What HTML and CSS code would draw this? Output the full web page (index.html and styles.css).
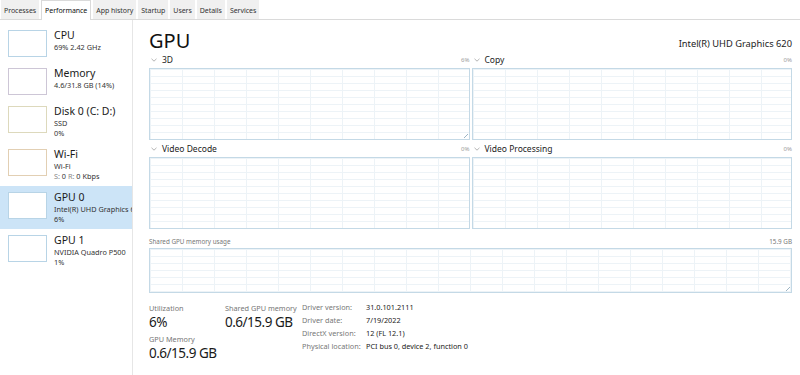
FILE: index.html
```html
<!DOCTYPE html>
<html lang="en">

<head>
    <meta charset="UTF-8">
    <meta name="viewport" content="width=device-width, initial-scale=1.0">
    <title>Task Manager - Performance</title>
    <link rel="stylesheet" href="styles.css">
</head>

<body>
    <!-- Tab strip -->
    <div class="tabs">
        <div class="tab">Processes</div>
        <div class="tab active">Performance</div>
        <div class="tab">App history</div>
        <div class="tab">Startup</div>
        <div class="tab">Users</div>
        <div class="tab">Details</div>
        <div class="tab">Services</div>
    </div>

    <div class="main">
        <!-- Device list -->
        <div class="sidebar">
            <div class="item">
                <div class="thumb cpu"></div>
                <div class="info">
                    <div class="name">CPU</div>
                    <div class="sub">69% 2.42 GHz</div>
                </div>
            </div>
            <div class="item">
                <div class="thumb mem"></div>
                <div class="info">
                    <div class="name">Memory</div>
                    <div class="sub">4.6/31.8 GB (14%)</div>
                </div>
            </div>
            <div class="item">
                <div class="thumb disk"></div>
                <div class="info">
                    <div class="name">Disk 0 (C: D:)</div>
                    <div class="sub">SSD</div>
                    <div class="sub">0%</div>
                </div>
            </div>
            <div class="item">
                <div class="thumb wifi"></div>
                <div class="info">
                    <div class="name">Wi-Fi</div>
                    <div class="sub">Wi-Fi</div>
                    <div class="sub"><span class="dim">S:</span> 0 <span class="dim">R:</span> 0 Kbps</div>
                </div>
            </div>
            <div class="item selected">
                <div class="thumb gpu"></div>
                <div class="info">
                    <div class="name">GPU 0</div>
                    <div class="sub">Intel(R) UHD Graphics 6</div>
                    <div class="sub">6%</div>
                </div>
            </div>
            <div class="item">
                <div class="thumb gpu"></div>
                <div class="info">
                    <div class="name">GPU 1</div>
                    <div class="sub">NVIDIA Quadro P500</div>
                    <div class="sub">1%</div>
                </div>
            </div>
        </div>

        <!-- GPU details -->
        <div class="content">
            <div class="header">
                <div class="title">GPU</div>
                <div class="model">Intel(R) UHD Graphics 620</div>
            </div>

            <div class="graphs">
                <div class="panel">
                    <div class="label"><svg class="caret" viewBox="0 0 6 4"><path d="M0.5 0.8 L3 3.2 L5.5 0.8"/></svg>3D <span class="pct">6%</span></div>
                    <div class="graph"><span class="grip"></span></div>
                </div>
                <div class="panel">
                    <div class="label"><svg class="caret" viewBox="0 0 6 4"><path d="M0.5 0.8 L3 3.2 L5.5 0.8"/></svg>Copy <span class="pct">0%</span></div>
                    <div class="graph"></div>
                </div>
                <div class="panel">
                    <div class="label"><svg class="caret" viewBox="0 0 6 4"><path d="M0.5 0.8 L3 3.2 L5.5 0.8"/></svg>Video Decode <span class="pct">0%</span></div>
                    <div class="graph"></div>
                </div>
                <div class="panel">
                    <div class="label"><svg class="caret" viewBox="0 0 6 4"><path d="M0.5 0.8 L3 3.2 L5.5 0.8"/></svg>Video Processing <span class="pct">0%</span></div>
                    <div class="graph"></div>
                </div>
            </div>

            <div class="shared-label">
                <span>Shared GPU memory usage</span>
                <span>15.9 GB</span>
            </div>
            <div class="graph wide"><span class="grip"></span></div>

            <div class="stats">
                <div class="stat-col">
                    <div class="stat">
                        <div class="stat-label">Utilization</div>
                        <div class="stat-value">6%</div>
                    </div>
                    <div class="stat">
                        <div class="stat-label">GPU Memory</div>
                        <div class="stat-value">0.6/15.9 GB</div>
                    </div>
                </div>
                <div class="stat-col second">
                    <div class="stat">
                        <div class="stat-label">Shared GPU memory</div>
                        <div class="stat-value">0.6/15.9 GB</div>
                    </div>
                </div>
                <div class="details">
                    <div class="key">Driver version:</div><div class="val">31.0.101.2111</div>
                    <div class="key">Driver date:</div><div class="val">7/19/2022</div>
                    <div class="key">DirectX version:</div><div class="val">12 (FL 12.1)</div>
                    <div class="key">Physical location:</div><div class="val">PCI bus 0, device 2, function 0</div>
                </div>
            </div>
        </div>
    </div>
</body>

</html>
```

FILE: styles.css
```css
body {
    margin: 0;
    font-family: "Noto Sans", "Open Sans", sans-serif;
    background-color: #ffffff;
    color: #1a1a1a;
    width: 800px;
    height: 375px;
    overflow: hidden;
}

/* Tabs */
.tabs {
    display: flex;
    height: 19px;
    padding-left: 1px;
    border-bottom: 1px solid #dadada;
    background-color: #ffffff;
}

.tab {
    font-size: 7px;
    line-height: 17px;
    padding: 2px 3px 0 3px;
    margin-right: 2px;
    background-color: #f0f0f0;
    color: #333;
    letter-spacing: -0.05px;
}

.tab.active {
    background-color: #ffffff;
    border: 1px solid #dadada;
    border-bottom: none;
    margin-bottom: -1px;
    padding-top: 0;
    line-height: 20px;
    color: #111;
}

.main {
    display: flex;
    height: 355px;
}

/* Sidebar */
.sidebar {
    width: 133px;
    border-right: 1px solid #e6e6e6;
    padding-top: 4px;
    box-sizing: border-box;
    flex-shrink: 0;
}

.item {
    display: flex;
    gap: 7px;
    padding: 5px 0 5px 8px;
    min-height: 28px;
    overflow: hidden;
    white-space: nowrap;
}

.item.selected {
    background-color: #cce4f7;
}

.thumb {
    width: 37px;
    height: 25px;
    background-color: #ffffff;
    border: 1px solid #b8d4e6;
    flex-shrink: 0;
    margin-top: 1px;
}

.thumb.mem {
    border-color: #cdc6d6;
}

.thumb.disk {
    border-color: #ddd9bc;
}

.thumb.wifi {
    border-color: #e2cfb3;
}

.thumb.gpu {
    border-color: #b8d4e6;
}

.name {
    font-size: 10.5px;
    line-height: 13px;
    color: #1a1a1a;
}

.sub {
    font-size: 7.3px;
    line-height: 10px;
    color: #333;
}

.dim {
    color: #888;
}

/* Content */
.content {
    flex: 1;
    padding: 7px 8px 0 16px;
    min-width: 0;
}

.header {
    display: flex;
    justify-content: space-between;
    align-items: flex-end;
    height: 26px;
}

.title {
    font-size: 20px;
    line-height: 24px;
    color: #111;
}

.model {
    font-size: 9.3px;
    line-height: 14px;
    margin-bottom: 2px;
    color: #222;
}

.graphs {
    display: grid;
    grid-template-columns: 1fr 1fr;
    column-gap: 2px;
    row-gap: 3px;
    margin-top: 1px;
}

.label {
    display: flex;
    align-items: center;
    font-size: 8.5px;
    line-height: 12px;
    padding-left: 2px;
    color: #222;
}

.caret {
    width: 6px;
    height: 4px;
    margin-right: 5px;
    fill: none;
    stroke: #a0a0a0;
    stroke-width: 0.8;
}

.pct {
    margin-left: auto;
    font-size: 6px;
    color: #999;
}

.graph {
    position: relative;
    height: 70px;
    margin-top: 2px;
    border: 1px solid #c4d9e6;
    background-color: #ffffff;
    background-image:
        linear-gradient(to right, #edf3f7 1px, transparent 1px),
        linear-gradient(to bottom, #edf3f7 1px, transparent 1px);
    background-size: 32px 100%, 100% 7px;
}

.graph.wide {
    height: 43px;
    margin-top: 2px;
    background-size: 32px 100%, 100% 7px;
}

.grip {
    position: absolute;
    right: 1px;
    bottom: 1px;
    width: 5px;
    height: 5px;
    background: linear-gradient(135deg, transparent 55%, #9db5c4 55%, #9db5c4 65%, transparent 65%);
}

.shared-label {
    display: flex;
    justify-content: space-between;
    font-size: 6.3px;
    line-height: 9px;
    color: #777;
    margin-top: 8px;
}

/* Stats */
.stats {
    display: flex;
    margin-top: 10px;
}

.stat-col {
    width: 76px;
}

.stat-col.second {
    width: 77px;
}

.stat {
    margin-bottom: 3px;
}

.stat-label {
    font-size: 7.3px;
    line-height: 10px;
    color: #777;
}

.stat-value {
    font-size: 13.5px;
    line-height: 18px;
    letter-spacing: -0.5px;
    color: #1a1a1a;
}

.details {
    display: grid;
    grid-template-columns: 64px auto;
    align-content: start;
    font-size: 7.3px;
    line-height: 13px;
    margin-top: -2px;
}

.key {
    color: #777;
}

.val {
    color: #222;
}
```
